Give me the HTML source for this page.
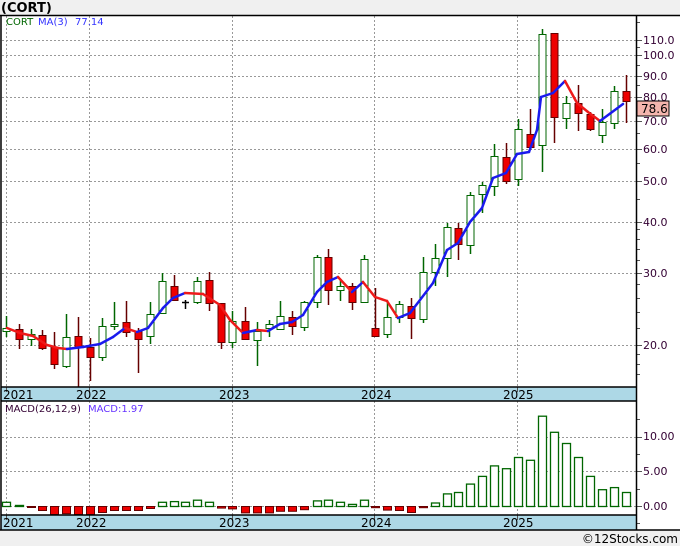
<!DOCTYPE html>
<html><head><meta charset="utf-8"><style>
html,body{margin:0;padding:0;background:#f0f0f0;width:680px;height:546px;overflow:hidden}
svg{display:block}
text{font-family:"DejaVu Sans","Liberation Sans",sans-serif}
</style></head><body>
<svg id="s" width="680" height="546" xmlns="http://www.w3.org/2000/svg">
<rect x="0" y="0" width="680" height="546" fill="#f0f0f0"/>
<text x="1" y="12" font-size="13" font-weight="bold" fill="#000">(CORT)</text>
<rect x="1" y="15" width="679" height="515" fill="#fff"/>
<rect x="1" y="387" width="635" height="14" fill="#add8e6"/>
<rect x="1" y="515" width="635" height="15" fill="#add8e6"/>
<g id="grid" stroke="#999" stroke-dasharray="2,2" stroke-width="1"></g>
<g id="ticks" stroke="#555" stroke-width="1"></g>
<g id="c"></g>
<g id="m"></g>
<g fill="none" stroke="#000" stroke-width="1.5">
<line x1="0" y1="15.5" x2="680" y2="15.5"/>
<line x1="1" y1="15" x2="1" y2="530"/>
<line x1="636.5" y1="15" x2="636.5" y2="530"/>
<line x1="1" y1="387" x2="636" y2="387"/>
<line x1="1" y1="401" x2="636" y2="401"/>
<line x1="1" y1="515" x2="636" y2="515"/>
<line x1="0" y1="530" x2="680" y2="530"/>
</g>
<g font-size="11" fill="#330033">
<text x="643" y="44">110.0</text><text x="643" y="59">100.0</text><text x="643" y="80">90.0</text>
<text x="643" y="101">80.0</text><text x="643" y="125">70.0</text><text x="643" y="153">60.0</text>
<text x="643" y="185">50.0</text><text x="643" y="226">40.0</text><text x="643" y="277">30.0</text>
<text x="643" y="349">20.0</text>
<text x="643" y="440">10.00</text><text x="643" y="475">5.00</text><text x="643" y="510">0.00</text>
</g>
<rect x="637" y="101" width="32" height="15" fill="#f4b5ad" stroke="#000" stroke-width="1"/>
<text x="641" y="113" font-size="12" fill="#000">78.6</text>
<g font-size="12" fill="#000">
<text x="3" y="399">2021</text><text x="76" y="399">2022</text><text x="219" y="399">2023</text>
<text x="361" y="399">2024</text><text x="503" y="399">2025</text>
<text x="3" y="527">2021</text><text x="76" y="527">2022</text><text x="219" y="527">2023</text>
<text x="361" y="527">2024</text><text x="503" y="527">2025</text>
</g>
<text x="6" y="25" font-size="10" fill="#006600">CORT</text>
<text x="38" y="25" font-size="10" fill="#3333ff">MA(3)</text>
<text x="75" y="25" font-size="10" fill="#3333ff">77.14</text>
<text x="5" y="412" font-size="10" fill="#330033">MACD(26,12,9)</text>
<text x="88" y="412" font-size="10" fill="#6633ff">MACD:1.97</text>
<text x="678" y="543" font-size="12" fill="#000" text-anchor="end">©12Stocks.com</text>
</svg>
<script>
var NS="http://www.w3.org/2000/svg";
function el(p,t,a){var e=document.createElementNS(NS,t);for(var k in a)e.setAttribute(k,a[k]);document.getElementById(p).appendChild(e);return e;}
[40,55,76,97,121,149,181,222,273,345].forEach(function(y){el("grid","line",{x1:2,y1:y+.5,x2:636,y2:y+.5});el("ticks","line",{x1:636,y1:y+.5,x2:642,y2:y+.5});});
[437,471,506].forEach(function(y){el("grid","line",{x1:2,y1:y+.5,x2:636,y2:y+.5});el("ticks","line",{x1:636,y1:y+.5,x2:642,y2:y+.5});});
[6,89,232,374,517].forEach(function(x){el("grid","line",{x1:x+.5,y1:16,x2:x+.5,y2:387});el("grid","line",{x1:x+.5,y1:401,x2:x+.5,y2:515});
 el("ticks","line",{x1:x+.5,y1:387,x2:x+.5,y2:392});el("ticks","line",{x1:x+.5,y1:515,x2:x+.5,y2:520});});
[17,18,19,22,24,26,28,32,34,36,38,45,55,65,75,85,95,105,120].forEach(function(p){var y=Math.round(345-180*Math.log(p/20));if(y>17&&y<386)el("ticks","line",{x1:636,y1:y+.5,x2:640,y2:y+.5});});
[419,454,489,523].forEach(function(y){el("ticks","line",{x1:636,y1:y+.5,x2:640,y2:y+.5});});
var C=[[6,316,337,328,331,1],[19,324,349,329,339,0],[31,329,346,334,339,1],[42,330,350,335,348,0],[54,332,369,347,364,0],[66,314,368,337,366,1],[78,317,387,336,347,0],[90,338,381,347,357,0],[102,318,361,326,357,1],[114,302,330,324,326,1],[126,301,337,322,332,0],[138,328,373,331,339,0],[150,302,344,314,336,1],[162,273,313,281,313,1],[174,275,300,286,300,0],[185,300,309,302,303,2],[197,277,304,281,302,1],[209,272,311,280,303,0],[221,303,349,303,342,0],[232,311,348,321,342,1],[245,307,339,321,339,0],[257,322,366,331,340,1],[269,320,337,324,328,1],[280,301,330,316,329,1],[292,311,335,317,326,0],[304,301,331,302,327,1],[317,255,308,257,302,1],[328,249,305,257,290,0],[340,279,301,286,290,1],[352,283,310,286,302,0],[364,255,303,259,302,1],[375,288,336,328,336,0],[387,301,338,317,334,1],[399,301,323,304,317,1],[411,298,339,306,318,0],[423,257,323,272,319,1],[435,244,286,258,272,1],[447,223,277,227,258,1],[458,223,260,228,244,0],[470,192,254,195,245,1],[482,182,213,185,194,1],[494,144,196,156,186,1],[506,143,184,157,181,0],[518,119,186,129,179,1],[530,109,150,134,147,0],[542,29,172,34,145,1],[554,33,143,33,117,0],[566,96,129,103,118,1],[578,85,131,103,113,0],[590,112,131,114,129,0],[602,109,143,122,135,1],[614,86,129,91,123,1],[626,75,123,91,101,0]];
C.forEach(function(c){var x=c[0],col=c[5]==1?"#006600":(c[5]==2?"#000":"#660000");
 el("c","line",{x1:x+.5,y1:c[1],x2:x+.5,y2:c[2],stroke:col,"stroke-width":1.5});
 if(c[5]==2){el("c","line",{x1:x-3,y1:c[3]+.5,x2:x+4,y2:c[3]+.5,stroke:"#000","stroke-width":1.5});return;}
 var h=Math.max(1,c[4]-c[3]);
 el("c","rect",{x:x-3,y:c[3]+.5,width:7,height:h,fill:c[5]==1?"#fff":"#ee0000",stroke:c[5]==1?"#006600":"#660000","stroke-width":1});});
var P=[[7,328],[20,333],[33,336],[47,345],[58,348],[67,349],[83,347],[100,344],[113,337],[125,328],[137,332],[148,328],[163,308],[173,298],[185,293],[203,294],[220,305],[230,320],[243,333],[257,330],[268,331],[280,324],[292,322],[303,315],[317,292],[327,282],[338,277],[352,292],[363,282],[375,297],[387,301],[398,318],[410,313],[433,283],[447,250],[458,243],[470,222],[482,208],[493,178],[506,173],[517,154],[529,152],[537,130],[541,97],[553,93],[565,81],[577,103],[588,112],[600,121],[623,104]];
for(var i=1;i<P.length;i++){var a=P[i-1],b=P[i];el("c","line",{x1:a[0],y1:a[1],x2:b[0],y2:b[1],stroke:b[1]<=a[1]?"#1a1aee":"#ee1a1a","stroke-width":2.5,"stroke-linecap":"round"});}
var M=[0.6,0.15,-0.2,-1,-2,-1.8,-2,-2,-1.5,-1,-1,-1,-0.5,0.6,0.7,0.6,0.9,0.6,-0.4,-0.6,-1.6,-1.6,-1.6,-1.2,-1.2,-0.8,0.8,0.9,0.6,0.3,0.9,-0.3,-0.9,-1,-1.5,-0.3,0.5,1.8,2,3.2,4.3,5.8,5.4,7,6.6,12.9,10.6,9,7,4.3,2.4,2.7,2];
M.forEach(function(v,i){var x=C[i][0];
 if(v>=0){var h=Math.max(1,v*7);el("m","rect",{x:x-3.5,y:506.5-h,width:8,height:h,fill:"#fff",stroke:"#006600","stroke-width":1.3});}
 else{var h=Math.max(1,-v*4);el("m","rect",{x:x-3.5,y:506.5,width:8,height:h,fill:"#ee0000",stroke:"#660000","stroke-width":1});}});
</script>
</body></html>
